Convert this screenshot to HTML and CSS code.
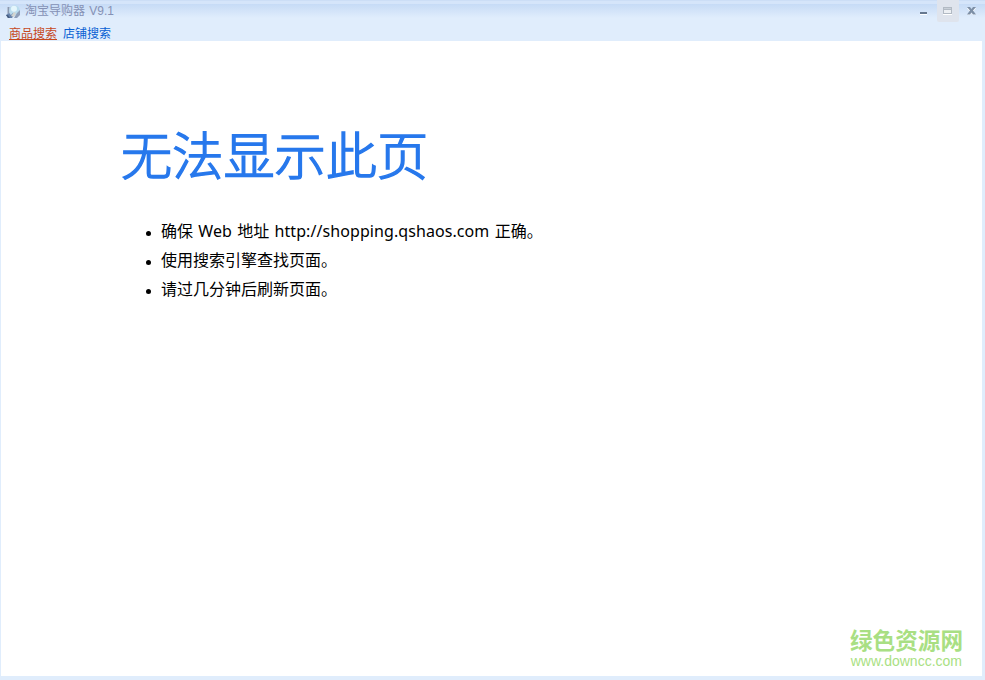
FILE: index.html
```html
<!DOCTYPE html>
<html lang="zh-CN">
<head>
<meta charset="utf-8">
<title>淘宝导购器 V9.1</title>
<link rel="stylesheet" href="styles.css">
</head>
<body>
<div class="window">
  <header class="titlebar">
    <svg class="app-icon" width="16" height="16" viewBox="0 0 16 16">
      <path d="M2 3h4v7H2z" fill="#b4c0d2"/>
      <path d="M3 3h1v6H3z" fill="#8998b1"/>
      <circle cx="9.500" cy="6.500" r="5.300" fill="#b9dcee"/>
      <circle cx="9" cy="4.800" r="3" fill="#e4f6fc"/>
      <path d="M1 11l3-2 2 2 2-2 1 2-2 3H3z" fill="#6582ab"/>
      <path d="M6 12l3-4 2 1-2 4z" fill="#d3d4cf"/>
      <path d="M1 11h2l2 3H3z" fill="#455c80"/>
      <path d="M12 9l3-3v5l-3 3H9z" fill="#8f9fb9"/>
    </svg>
    <h1 class="caption">淘宝导购器 V9.1</h1>
    <div class="controls">
      <svg class="control" width="22" height="22" viewBox="0 0 22 22" shape-rendering="crispEdges"><path d="M7 12h7v2H7z" fill="#66788f"/><path d="M7 14h7v1H7z" fill="#fff"/></svg>
      <svg class="control disabled" width="22" height="22" viewBox="0 0 22 22" shape-rendering="crispEdges"><path d="M6 7h9v7H6z" fill="#b2bac4"/><path d="M7 10h7v3H7z" fill="#edf0f4"/><path d="M7 8h7v1H7z" fill="#c9d0d8"/><path d="M6 14h9v1H6z" fill="#fff"/></svg>
      <svg class="control" width="22" height="22" viewBox="0 0 22 22"><path d="M6 8h3l1.500 2 1.500-2h3l-3 4 3 3h-3l-1.500-2-1.500 2H6l3-3z" fill="#fff"/><path d="M6 7h3l1.500 2 1.500-2h3l-3 3.500 3 4h-3l-1.500-2-1.500 2H6l3-4z" fill="#7d8fa6"/></svg>
    </div>
  </header>
  <nav class="tabs">
    <a class="tab active">商品搜索</a>
    <a class="tab">店铺搜索</a>
  </nav>
  <main class="page">
    <h2 class="error-title">无法显示此页</h2>
    <ul class="tips">
      <li><span class="tip tip-address">确保 <span class="latin">Web</span> 地址 <span class="latin">http://shopping.qshaos.com</span> 正确。</span></li>
      <li><span class="tip">使用搜索引擎查找页面。</span></li>
      <li><span class="tip">请过几分钟后刷新页面。</span></li>
    </ul>
    <div class="watermark">
      <span class="site-name">绿色资源网</span>
      <span class="site-url">www.downcc.com</span>
    </div>
  </main>
</div>
</body>
</html>
```
FILE: styles.css
```css
* { box-sizing: border-box; }

body {
  margin: 0;
  overflow: hidden;
  font-family: "Noto Sans", "Noto Sans CJK SC", sans-serif;
}

.window {
  width: 985px;
  height: 680px;
  display: flex;
  flex-direction: column;
  padding: 0 3px 4px 1px;
  background: #e0edfc;
}

.titlebar {
  height: 24px;
  margin: 0 -3px 0 -1px;
  padding: 0 2px 0 5px;
  display: flex;
  flex: none;
  align-items: flex-start;
  background: linear-gradient(#c3d7f2 0, #d5e5fa 1px, #d5e5fa 4px, #c6dbf6 4px, #d5e5f9 12px, #e0edfc 18px);
}

.app-icon { margin-top: 4px; }

.caption {
  margin: 0 auto 0 4px;
  font: 12px/22px "Liberation Sans", "Noto Sans CJK SC", sans-serif;
  word-spacing: 1px;
  color: #8591b5;
}

.controls { display: flex; gap: 2px; }
.control { border-radius: 0 0 2px 2px; }
.disabled { background: #dfe4ed; }

.tabs {
  height: 17px;
  padding-left: 8px;
  display: flex;
  flex: none;
  gap: 6px;
}

.tab {
  font: 12px/18px "Noto Sans CJK SC", sans-serif;
  color: #075fd3;
}

.active {
  color: #c6481d;
  text-decoration: underline;
  text-underline-offset: 1px;
}

.page {
  flex: 1;
  display: flex;
  flex-direction: column;
  background: #fff;
}

.error-title {
  margin: 74px 0 0 120px;
  height: 76px;
  font: 300 51.200px/76px "Noto Sans CJK SC", sans-serif;
  color: #2778ec;
  -webkit-text-stroke: 1.500px #2778ec;
}

.tips {
  margin: 26px 0 0 120px;
  padding: 0;
  list-style: none;
  color: #000;
}

.tips li {
  height: 29px;
  display: flex;
  align-items: center;
  font-size: 16px;
  line-height: 29px;
}

.tips li::before {
  content: "";
  width: 5px;
  height: 5px;
  margin: 3px 10px 0 25px;
  border-radius: 50%;
  background: #000;
}

.tip-address { word-spacing: 1.100px; }
.latin { letter-spacing: .08px; }

.watermark {
  margin: auto 20px 7px auto;
  display: flex;
  flex-direction: column;
  align-items: flex-end;
  color: #a9df83;
}

.site-name {
  margin: 0 -1px -1px 0;
  font: 700 22.600px/25px "Liberation Sans", "Noto Sans CJK SC", sans-serif;
}
.site-url { font: 14px/16px "Liberation Sans", sans-serif; }
```
